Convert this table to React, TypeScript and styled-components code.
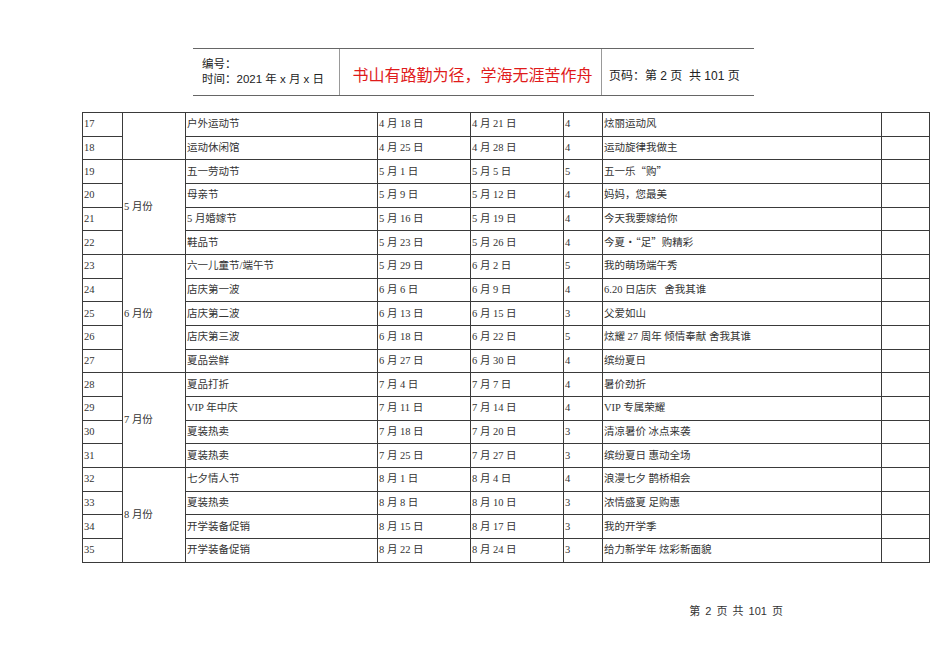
import styled, { createGlobalStyle } from "styled-components";

const GlobalStyle = createGlobalStyle`
  html, body {
    margin: 0;
    padding: 0;
    background: #ffffff;
  }
`;

const Page = styled.div`
  width: 950px;
  height: 672px;
  background: #fff;
  position: relative;
  overflow: hidden;
  font-family: "Liberation Sans", "Noto Sans CJK SC", sans-serif;
  color: #222;
`;

const Header = styled.div`
  margin: 48px 0 0 193px;
  width: 561px;
  height: 48px;
  box-sizing: border-box;
  border-top: 1.5px solid #666;
  border-bottom: 1.5px solid #666;
  display: flex;
`;

const HeaderCell = styled.div<{ $w: number; $divider?: boolean }>`
  width: ${(p) => p.$w}px;
  box-sizing: border-box;
  border-left: ${(p) => (p.$divider ? "1.5px solid #999" : "none")};
  display: flex;
  flex-direction: column;
  justify-content: center;
`;

const MetaLine = styled.div`
  font-size: 11.5px;
  line-height: 15px;
  padding-left: 9px;
`;

const Motto = styled.div`
  font-size: 16px;
  color: #e01b1b;
  text-align: center;
  padding: 4px 0 0 4px;
`;

const PageNo = styled.div`
  font-size: 12px;
  padding: 4px 0 0 7px;
`;

const Table = styled.table`
  margin: 16px 0 0 82px;
  width: 847px;
  border-collapse: collapse;
  table-layout: fixed;
  font-family: "Liberation Serif", "Noto Sans CJK SC", serif;
  font-size: 10.5px;
  color: #333;
`;

const Row = styled.tr`
  height: 23.68px;
`;

const Cell = styled.td`
  border: 1px solid #3a3a3a;
  padding: 0 0 0 1px;
  white-space: nowrap;
  overflow: hidden;
  vertical-align: middle;
  line-height: 14px;
`;

const Quote = styled.span`
  font-family: "Noto Sans CJK SC", sans-serif;
`;

const Footer = styled.div`
  position: absolute;
  right: 167px;
  top: 602px;
  font-size: 11px;
  color: #333;
  word-spacing: 2px;
`;

const widths = [40, 63, 192, 93, 93, 39, 279, 48];

type Item = {
  no: number;
  month?: { label: string; span: number };
  name: string;
  start: string;
  end: string;
  days: string;
  theme: React.ReactNode;
};

const rows: Item[] = [
  { no: 17, month: { label: "", span: 2 }, name: "户外运动节", start: "4 月 18 日", end: "4 月 21 日", days: "4", theme: "炫丽运动风" },
  { no: 18, name: "运动休闲馆", start: "4 月 25 日", end: "4 月 28 日", days: "4", theme: "运动旋律我做主" },
  { no: 19, month: { label: "5 月份", span: 4 }, name: "五一劳动节", start: "5 月 1 日", end: "5 月 5 日", days: "5", theme: <>五一乐<Quote>“</Quote>购<Quote>”</Quote></> },
  { no: 20, name: "母亲节", start: "5 月 9 日", end: "5 月 12 日", days: "4", theme: "妈妈，您最美" },
  { no: 21, name: "5 月婚嫁节", start: "5 月 16 日", end: "5 月 19 日", days: "4", theme: "今天我要嫁给你" },
  { no: 22, name: "鞋品节", start: "5 月 23 日", end: "5 月 26 日", days: "4", theme: <>今夏<Quote>·</Quote><Quote>“</Quote>足<Quote>”</Quote>购精彩</> },
  { no: 23, month: { label: "6 月份", span: 5 }, name: "六一儿童节/端午节", start: "5 月 29 日", end: "6 月 2 日", days: "5", theme: "我的萌场端午秀" },
  { no: 24, name: "店庆第一波", start: "6 月 6 日", end: "6 月 9 日", days: "4", theme: "6.20 日店庆\u00a0\u00a0\u00a0舍我其谁" },
  { no: 25, name: "店庆第二波", start: "6 月 13 日", end: "6 月 15 日", days: "3", theme: "父爱如山" },
  { no: 26, name: "店庆第三波", start: "6 月 18 日", end: "6 月 22 日", days: "5", theme: "炫耀 27 周年\u00a0倾情奉献\u00a0舍我其谁" },
  { no: 27, name: "夏品尝鲜", start: "6 月 27 日", end: "6 月 30 日", days: "4", theme: "缤纷夏日" },
  { no: 28, month: { label: "7 月份", span: 4 }, name: "夏品打折", start: "7 月 4 日", end: "7 月 7 日", days: "4", theme: "暑价劲折" },
  { no: 29, name: "VIP 年中庆", start: "7 月 11 日", end: "7 月 14 日", days: "4", theme: "VIP 专属荣耀" },
  { no: 30, name: "夏装热卖", start: "7 月 18 日", end: "7 月 20 日", days: "3", theme: "清凉暑价\u00a0冰点来袭" },
  { no: 31, name: "夏装热卖", start: "7 月 25 日", end: "7 月 27 日", days: "3", theme: "缤纷夏日\u00a0惠动全场" },
  { no: 32, month: { label: "8 月份", span: 4 }, name: "七夕情人节", start: "8 月 1 日", end: "8 月 4 日", days: "4", theme: "浪漫七夕\u00a0鹊桥相会" },
  { no: 33, name: "夏装热卖", start: "8 月 8 日", end: "8 月 10 日", days: "3", theme: "浓情盛夏\u00a0足购惠" },
  { no: 34, name: "开学装备促销", start: "8 月 15 日", end: "8 月 17 日", days: "3", theme: "我的开学季" },
  { no: 35, name: "开学装备促销", start: "8 月 22 日", end: "8 月 24 日", days: "3", theme: "给力新学年\u00a0炫彩新面貌" },
];

const App = () => {
  return (
    <Page>
      <GlobalStyle />
      <Header>
        <HeaderCell $w={146}>
          <MetaLine>编号：</MetaLine>
          <MetaLine>时间：2021 年 x 月 x 日</MetaLine>
        </HeaderCell>
        <HeaderCell $w={262} $divider>
          <Motto>书山有路勤为径，学海无涯苦作舟</Motto>
        </HeaderCell>
        <HeaderCell $w={153} $divider>
          <PageNo>页码：第 2 页&nbsp; 共 101 页</PageNo>
        </HeaderCell>
      </Header>

      <Table>
        <colgroup>
          {widths.map((w, i) => (
            <col key={i} style={{ width: w }} />
          ))}
        </colgroup>
        <tbody>
          {rows.map((r) => (
            <Row key={r.no}>
              <Cell>{r.no}</Cell>
              {r.month && <Cell rowSpan={r.month.span}>{r.month.label}</Cell>}
              <Cell>{r.name}</Cell>
              <Cell>{r.start}</Cell>
              <Cell>{r.end}</Cell>
              <Cell>{r.days}</Cell>
              <Cell>{r.theme}</Cell>
              <Cell />
            </Row>
          ))}
        </tbody>
      </Table>

      <Footer>第 2 页 共 101 页</Footer>
    </Page>
  );
};

export default App;
